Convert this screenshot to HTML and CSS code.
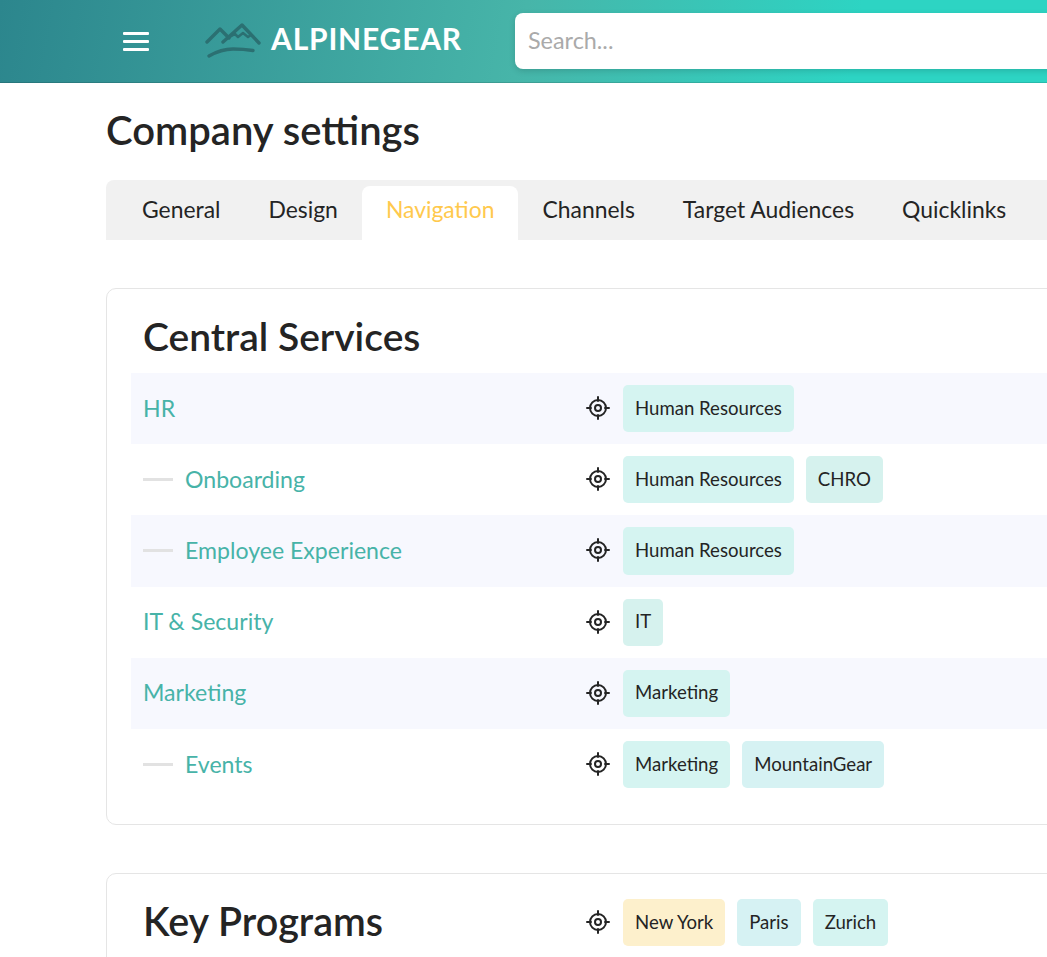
FILE: index.html
```html
<!DOCTYPE html>
<html lang="en">
<head>
    <meta charset="UTF-8">
    <meta name="viewport" content="width=device-width, initial-scale=1.0">
    <title>Company settings</title>
    <link rel="stylesheet" href="styles.css">
</head>
<body>
    <svg class="icon-defs" width="0" height="0">
        <symbol id="target" viewBox="0 0 24 24">
            <circle cx="12" cy="12" r="8" fill="none" stroke="currentColor" stroke-width="2"/>
            <circle cx="12" cy="12" r="3" fill="none" stroke="currentColor" stroke-width="2"/>
            <path d="M12 1v4M12 19v4M1 12h4M19 12h4" fill="none" stroke="currentColor" stroke-width="2" stroke-linecap="round"/>
        </symbol>
    </svg>

    <header class="topbar">
        <button class="menu-button" aria-label="Menu">
            <span></span><span></span><span></span>
        </button>
        <div class="logo">
            <svg class="logo-mark" width="56" height="36" viewBox="0 0 56 36">
                <path d="M2 19 15 6l9 9M18 19 37 2l17 18" fill="none" stroke="#2b7072" stroke-width="3.400" stroke-linecap="round" stroke-linejoin="round"/>
                <path d="M23 15l7-4 3 3 5-4 5 4 3-2" fill="none" stroke="#2b7072" stroke-width="2.500" stroke-linecap="round" stroke-linejoin="round"/>
                <path d="M4 33c7-4 16-7 24-7 7 0 13 .4 20 1.500" fill="none" stroke="#2b7072" stroke-width="3.500" stroke-linecap="round"/>
            </svg>
            <span class="logo-text">ALPINEGEAR</span>
        </div>
        <input class="search" type="text" placeholder="Search...">
    </header>

    <main class="page">
        <h1>Company settings</h1>

        <nav class="tabs">
            <a class="tab">General</a>
            <a class="tab">Design</a>
            <a class="tab active">Navigation</a>
            <a class="tab">Channels</a>
            <a class="tab">Target Audiences</a>
            <a class="tab">Quicklinks</a>
        </nav>

        <section class="card">
            <h2>Central Services</h2>
            <div class="row">
                <a class="row-name">HR</a>
                <svg class="target" width="24" height="24"><use href="#target"/></svg>
                <span class="tag">Human Resources</span>
            </div>
            <div class="row">
                <a class="row-name child">Onboarding</a>
                <svg class="target" width="24" height="24"><use href="#target"/></svg>
                <span class="tag">Human Resources</span>
                <span class="tag tag-soft">CHRO</span>
            </div>
            <div class="row">
                <a class="row-name child">Employee Experience</a>
                <svg class="target" width="24" height="24"><use href="#target"/></svg>
                <span class="tag">Human Resources</span>
            </div>
            <div class="row">
                <a class="row-name">IT &amp; Security</a>
                <svg class="target" width="24" height="24"><use href="#target"/></svg>
                <span class="tag tag-soft">IT</span>
            </div>
            <div class="row">
                <a class="row-name">Marketing</a>
                <svg class="target" width="24" height="24"><use href="#target"/></svg>
                <span class="tag">Marketing</span>
            </div>
            <div class="row">
                <a class="row-name child">Events</a>
                <svg class="target" width="24" height="24"><use href="#target"/></svg>
                <span class="tag">Marketing</span>
                <span class="tag tag-blue">MountainGear</span>
            </div>
        </section>

        <section class="card card-compact">
            <div class="row heading-row">
                <h2 class="row-name">Key Programs</h2>
                <svg class="target" width="24" height="24"><use href="#target"/></svg>
                <span class="tag tag-yellow">New York</span>
                <span class="tag tag-blue">Paris</span>
                <span class="tag">Zurich</span>
            </div>
        </section>
    </main>
</body>
</html>
```

FILE: styles.css
```css
html, body {
    overflow: hidden;
    height: 100%;
}
body {
    font-family: Lato, "Open Sans", sans-serif;
    margin: 0;
    color: #242424;
    background-color: #fff;
}
.icon-defs {
    display: block;
    height: 0;
}
.topbar {
    display: flex;
    align-items: center;
    width: 1500px;
    height: 83px;
    box-sizing: border-box;
    padding-left: 123px;
    border-bottom: 1px solid rgba(0, 0, 0, 0.12);
    background: linear-gradient(100deg, #2c868d 0, #47b5a9 520px, #2dd4c3 850px, #2dd4c3 1500px);
}
.menu-button {
    display: flex;
    flex-direction: column;
    gap: 5px;
    width: 26px;
    padding: 0;
    border: none;
    background: none;
}
.menu-button span {
    display: block;
    height: 3px;
    border-radius: 1px;
    background-color: #fff;
}
.logo {
    display: flex;
    align-items: center;
    gap: 10px;
    width: 310px;
    margin-left: 56px;
}
.logo-text {
    margin-bottom: 6px;
    color: #fff;
    font-size: 30px;
    font-weight: 700;
    letter-spacing: 0.8px;
}
.search {
    flex: 1;
    height: 56px;
    box-sizing: border-box;
    padding: 0 13px 3px;
    border: none;
    border-radius: 8px;
    font-family: inherit;
    font-size: 23.4px;
    background-color: #fff;
    box-shadow: 0 2px 6px rgba(0, 0, 0, 0.15);
}
.search::placeholder {
    color: #aaa;
}
.page {
    width: 1400px;
    padding-left: 106px;
}
h1 {
    margin: 23px 0 26px;
    font-size: 40px;
    line-height: 48px;
    font-weight: 600;
}
.tabs {
    display: flex;
    align-items: flex-end;
    height: 60px;
    box-sizing: border-box;
    padding-left: 12px;
    border-radius: 8px 0 0 0;
    background-color: #f1f1f1;
}
.tab {
    display: block;
    padding: 0 24px 8px;
    font-size: 22.9px;
    line-height: 46px;
}
.tab.active {
    border-radius: 8px 8px 0 0;
    color: #ffc94d;
    background-color: #fff;
}
.card {
    margin-top: 48px;
    padding: 24px;
    border: 1px solid #e5e5e5;
    border-radius: 10px;
}
.card-compact {
    padding-top: 25px;
}
h2 {
    margin: -1px 0 13px;
    padding: 0 12px;
    font-size: 39px;
    line-height: 48px;
    font-weight: 600;
}
.row {
    display: flex;
    align-items: center;
    gap: 12px;
    height: 71.2px;
    padding: 0 12px;
}
.row:nth-of-type(odd) {
    background-color: #f7f8fe;
}
.row-name {
    display: flex;
    align-items: center;
    width: 431px;
    padding-bottom: 2px;
    color: #47b3a8;
    font-size: 23.1px;
}
.row-name.child::before {
    content: "";
    width: 30px;
    height: 3px;
    margin-top: 2px;
    margin-right: 12px;
    background-color: #e2e2e2;
}
.target {
    flex: none;
    margin-right: 1px;
    margin-bottom: 1px;
    color: #242424;
}
.tag {
    display: flex;
    align-items: center;
    height: 47.2px;
    box-sizing: border-box;
    padding: 0 12px 2px;
    border-radius: 5px;
    font-size: 18.6px;
    background-color: #d5f4f1;
}
.tag-soft {
    background-color: #d6f2ee;
}
.tag-yellow {
    background-color: #fdf0cc;
}
.tag-blue {
    background-color: #d6f2f3;
}
.row.heading-row {
    height: 47.2px;
    padding: 0;
    background: none;
}
.heading-row h2.row-name {
    width: 443px;
    margin: 0;
    padding: 0 0 3px 12px;
    box-sizing: border-box;
    color: #242424;
    font-size: 39.5px;
}
```
